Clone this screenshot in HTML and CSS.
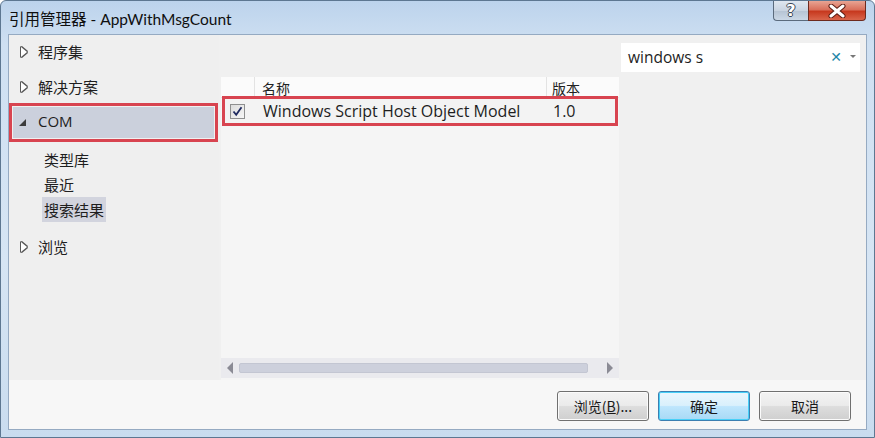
FILE: index.html
```html
<!DOCTYPE html>
<html>
<head>
<meta charset="utf-8">
<link rel="stylesheet" href="styles.css">
</head>
<body>
<div class="window">
  <div class="titlebar">
    <div class="title">引用管理器 - AppWithMsgCount</div>
    <div class="caption-buttons">
      <div class="cap help">?</div>
      <div class="cap close">
        <svg width="18" height="14" viewBox="0 0 18 14"><path d="M3 2 L15 12 M15 2 L3 12" stroke="#5a1a10" stroke-width="5" stroke-linecap="round"/><path d="M3 2 L15 12 M15 2 L3 12" stroke="#ffffff" stroke-width="3" stroke-linecap="round"/></svg>
      </div>
    </div>
  </div>
  <div class="client">
    <div class="main">
      <div class="leftpane">
        <div class="node first"><span class="tri-open"></span><span>程序集</span></div>
        <div class="node"><span class="tri-open"></span><span>解决方案</span></div>
        <div class="node com"><span class="tri-down"></span><span class="com-label">COM</span></div>
        <div class="subs">
          <div class="sub"><span>类型库</span></div>
          <div class="sub"><span>最近</span></div>
          <div class="sub"><span class="sel">搜索结果</span></div>
        </div>
        <div class="node"><span class="tri-open"></span><span>浏览</span></div>
      </div>
      <div class="centerpane">
        <div class="listbox">
          <div class="header">
            <div class="hcol check"></div>
            <div class="hcol name">名称</div>
            <div class="hcol ver">版本</div>
          </div>
          <div class="row">
            <div class="cell check"><span class="checkbox"><svg width="11" height="11" viewBox="0 0 11 11"><path d="M1.5 5.5 L4.2 8.8 L9.5 1.2" fill="none" stroke="#1f2a60" stroke-width="1.8"/></svg></span></div>
            <div class="cell name">Windows Script Host Object Model</div>
            <div class="cell ver">1.0</div>
          </div>
          <div class="spacer"></div>
          <div class="hscroll">
            <span class="arrow left"></span>
            <div class="track"><div class="thumb"></div></div>
            <span class="arrow right"></span>
          </div>
        </div>
      </div>
      <div class="rightpane">
        <div class="search">
          <span class="query">windows s</span>
          <span class="clear">✕</span>
          <span class="drop"></span>
        </div>
      </div>
    </div>
    <div class="footer">
      <button class="btn">浏览(<u>B</u>)...</button>
      <button class="btn default">确定</button>
      <button class="btn">取消</button>
    </div>
  </div>
</div>
</body>
</html>
```

FILE: styles.css
```css
* { box-sizing: border-box; }
html, body { margin: 0; padding: 0; }
body {
  width: 875px;
  height: 438px;
  overflow: hidden;
  background: #ffffff;
  font-family: "Open Sans", "Noto Sans CJK SC", sans-serif;
  color: #1e1e1e;
}
.window {
  width: 875px;
  height: 438px;
  background: linear-gradient(180deg, #bcd3ec 0%, #cfe0f2 10%, #d6e5f4 60%, #c9dcef 100%);
  border: 1px solid #5d7791;
  border-radius: 6px 6px 0 0;
  display: flex;
  flex-direction: column;
}
.titlebar {
  height: 33px;
  display: flex;
  align-items: flex-start;
  position: relative;
}
.title {
  font-family: "Lato", "Noto Sans CJK SC", sans-serif;
  font-size: 15.5px;
  color: #0f0f0f;
  padding: 6px 0 0 8px;
}
.caption-buttons {
  margin-left: auto;
  margin-right: 8px;
  display: flex;
}
.cap {
  height: 20px;
  border: 1px solid #5b6b7d;
  border-top: none;
  display: flex;
  align-items: center;
  justify-content: center;
}
.help {
  width: 35px;
  border-radius: 0 0 0 4px;
  border-right: none;
  background: linear-gradient(180deg, #dfe7f0 0%, #c9d4e1 50%, #b5c3d3 51%, #cbd8e6 100%);
  color: #ffffff;
  font-family: "DejaVu Sans", sans-serif;
  font-weight: bold;
  font-size: 16px;
  text-shadow: -1px 0 #3a4655, 1px 0 #3a4655, 0 -1px #3a4655, 0 1px #3a4655;
}
.close {
  width: 58px;
  border-radius: 0 0 4px 0;
  border-color: #6d2a1e;
  background: linear-gradient(180deg, #e8a493 0%, #d9705c 45%, #c7391f 55%, #d9654b 100%);
}
.client {
  margin: 0 7px 7px 7px;
  flex: 1;
  background: #f7f7f7;
  border: 1px solid #95aac2;
  display: flex;
  flex-direction: column;
}
.main {
  height: 345px;
  display: flex;
}
.leftpane {
  width: 210px;
  background: #efefef;
  font-family: "Noto Sans CJK SC", sans-serif;
  font-size: 15px;
  display: flex;
  flex-direction: column;
}
.node {
  height: 35px;
  display: flex;
  align-items: center;
  padding-left: 12px;
}
.node.first { margin-top: -1px; }
.tri-open {
  width: 0;
  height: 0;
  border-left: 6px solid #ffffff;
  border-top: 5px solid transparent;
  border-bottom: 5px solid transparent;
  margin-right: 11px;
  filter: drop-shadow(1px 0 0 #595959) drop-shadow(-1px 0 0 #595959) drop-shadow(0 1px 0 #595959) drop-shadow(0 -1px 0 #595959);
}
.tri-down {
  width: 0;
  height: 0;
  border-right: 7px solid #3c3c3c;
  border-top: 7px solid transparent;
  margin-right: 12px;
  margin-left: -3px;
  margin-top: 2px;
}
.node.com {
  height: 39px;
  width: 209px;
  margin-top: -1px;
  border: 3px solid #d84450;
  background: #cbd0dc;
  box-shadow: inset 0 0 0 1px #f0f0f0;
  padding-left: 10px;
  padding-bottom: 3px;
  font-family: "Open Sans", sans-serif;
  font-size: 15px;
}
.subs {
  margin-top: 6px;
  padding-left: 35px;
  display: flex;
  flex-direction: column;
}
.sub {
  height: 25px;
  display: flex;
  align-items: center;
  padding-bottom: 2px;
}
.sub .sel {
  background: #d2d4de;
  padding: 2px 2px;
  margin-left: -2px;
}
.subs + .node { margin-top: 6px; }
.centerpane {
  width: 400px;
  padding: 42px 0 0 2px;
  background: #f0f0f0;
  display: flex;
  flex-direction: column;
}
.listbox {
  flex: 1;
  background: #f5f5f5;
  display: flex;
  flex-direction: column;
}
.header {
  height: 21px;
  display: flex;
  background: #fbfbfb;
  border-bottom: 1px solid #e6e6e6;
  font-family: "Noto Sans CJK SC", sans-serif;
  font-size: 14px;
  color: #222;
}
.hcol {
  display: flex;
  align-items: flex-end;
  line-height: 18px;
}
.hcol.check { width: 34px; border-right: 1px solid #e3e3e3; }
.hcol.name { width: 292px; border-right: 1px solid #e3e3e3; padding-left: 7px; }
.hcol.ver { flex: 1; padding-left: 5px; }
.row {
  height: 30px;
  margin-top: -2px;
  display: flex;
  align-items: center;
  border: 3px solid #d84450;
  margin-left: 1px;
  margin-right: 1px;
  background: #f3f3f3;
  font-size: 16px;
}
.cell.check { width: 32px; padding-left: 5px; display: flex; align-items: center; }
.checkbox {
  width: 15px;
  height: 15px;
  border: 1px solid #8e8f8f;
  background: linear-gradient(135deg, #dcdcdc 0%, #f6f6f6 100%);
  display: flex;
  align-items: center;
  justify-content: center;
}
.cell.name { width: 292px; padding-left: 6px; }
.cell.ver { flex: 1; padding-left: 4px; }
.spacer { flex: 1; }
.hscroll {
  height: 20px;
  margin-bottom: 2px;
  display: flex;
  align-items: center;
  background: #eaeaee;
  padding: 0 6px;
}
.arrow {
  width: 0;
  height: 0;
  border-top: 6px solid transparent;
  border-bottom: 6px solid transparent;
}
.arrow.left { border-right: 6px solid #8b8b95; }
.arrow.right { border-left: 6px solid #8b8b95; }
.track { flex: 1; padding: 0 19px 0 6px; }
.thumb {
  height: 10px;
  background: #cdd0dc;
  border: 1px solid #c3c6d2;
  border-radius: 2px;
}
.rightpane {
  flex: 1;
  background: #f0f0f0;
  padding: 8px 6px 0 2px;
}
.search {
  height: 29px;
  background: #ffffff;
  display: flex;
  align-items: center;
  padding-left: 7px;
  padding-bottom: 2px;
  font-size: 15.5px;
}
.query { flex: 1; color: #1e1e1e; }
.clear {
  color: #1e86a8;
  font-family: "DejaVu Sans", sans-serif;
  font-weight: bold;
  font-size: 14px;
  margin-right: 8px;
}
.drop {
  width: 0;
  height: 0;
  border-left: 3px solid transparent;
  border-right: 3px solid transparent;
  border-top: 3px solid #777;
  margin-right: 4px;
}
.footer {
  flex: 1;
  display: flex;
  justify-content: flex-end;
  align-items: flex-start;
  padding: 11px 15px 0 0;
  gap: 9px;
}
.btn {
  width: 92px;
  height: 30px;
  border: 1px solid #707070;
  border-radius: 3px;
  background: linear-gradient(180deg, #f3f3f3 0%, #ebebeb 48%, #dddddd 52%, #cfcfcf 100%);
  box-shadow: inset 0 0 0 1px #fbfbfb;
  font-family: "Noto Sans CJK SC", sans-serif;
  font-size: 14px;
  color: #1a1a1a;
  padding: 0;
}
.btn u { text-decoration: underline; }
.btn.default {
  border-color: #3c7fb1;
  background: linear-gradient(180deg, #eaf6fd 0%, #d9f0fc 48%, #bee6fd 52%, #a7d9f5 100%);
  box-shadow: inset 0 0 0 1px #48d0f8;
}
```
